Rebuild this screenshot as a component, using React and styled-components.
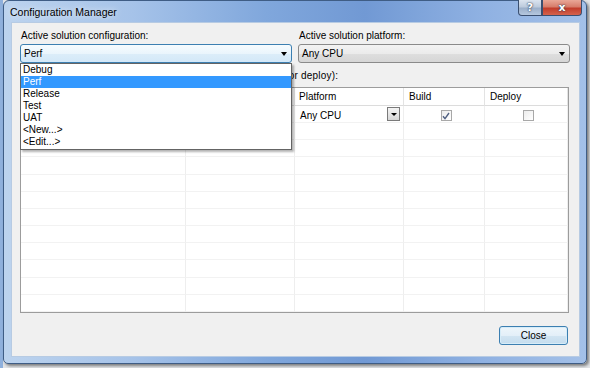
import React from 'react'
import styled, { createGlobalStyle } from 'styled-components'

const GlobalStyle = createGlobalStyle`
  html, body {
    margin: 0;
    padding: 0;
    background: #cfd7e1;
  }
  body {
    font-family: "Liberation Sans", Arial, sans-serif;
    font-size: 10px;
    color: #000;
  }
`

const configs = ['Debug', 'Perf', 'Release', 'Test', 'UAT', '<New...>', '<Edit...>']

const Screen = styled.div`
  width: 590px;
  height: 368px;
  overflow: hidden;
  box-sizing: border-box;
  padding-left: 3px;
  background: linear-gradient(90deg, #8fb0dc 0, #8fb0dc 3px, #e2e4e7 3px);
`

const Window = styled.div`
  width: 584px;
  height: 364px;
  box-sizing: border-box;
  border: 1px solid #3f5d85;
  border-radius: 6px 6px 5px 5px;
  background: linear-gradient(90deg, #bcd3ee 0%, #a6c3e9 22%, #80a7dc 45%, #7199d4 62%, #8fb1e2 82%, #a3c0e8 100%);
  box-shadow: 2px 2px 3px rgba(0, 0, 0, 0.45);
  display: flex;
  flex-direction: column;
  padding: 0 6px 6px 7px;
`

const TitleBar = styled.div`
  height: 21px;
  display: flex;
  align-items: center;
  margin-left: -7px;
  margin-right: -6px;
  padding-left: 6px;
  padding-right: 4px;
`

const Title = styled.span`
  flex: 1;
  font-size: 10.5px;
  color: #000;
  text-shadow: 0 0 6px rgba(255, 255, 255, 0.9);
`

const Captions = styled.div`
  align-self: flex-start;
  margin-top: -1px;
  display: flex;
`

const CaptionButton = styled.div`
  width: ${p => p.$width}px;
  height: 16px;
  box-sizing: border-box;
  border: 1px solid #3a4f70;
  border-top: none;
  border-radius: ${p => p.$radius};
  display: flex;
  align-items: center;
  justify-content: center;
  background: ${p => p.$close
    ? 'linear-gradient(180deg, #e9a797 0%, #d77d6b 45%, #c23d2b 55%, #d4624d 100%)'
    : 'linear-gradient(180deg, #dbe4ef 0%, #bdcbdd 45%, #9cb0ca 55%, #b5c7df 100%)'};
  color: #fff;
  font-family: "DejaVu Sans", sans-serif;
  font-weight: bold;
  font-size: 11px;
  line-height: 1;
  text-shadow: 0 0 2px #2b3a52, 0 0 1px #2b3a52;
`

const Client = styled.div`
  flex: 1;
  box-sizing: border-box;
  border: 1px solid #b7cbe3;
  background: #f0f0f0;
  display: flex;
  flex-direction: column;
  padding: 7px 0 11px 0;
`

const TopRow = styled.div`
  display: grid;
  grid-template-columns: 272px 272px;
  column-gap: 6px;
  padding-left: 8px;
`

const Field = styled.div`
  display: flex;
  flex-direction: column;
`

const Label = styled.div`
  height: 12px;
  line-height: 12px;
  margin: 0 0 2px 1px;
  white-space: nowrap;
`

const ComboWrap = styled.div`
  position: relative;
`

const Combo = styled.div`
  height: 19px;
  box-sizing: border-box;
  border: 1px solid ${p => p.$focused ? '#3c7fb1' : '#8a8a8a'};
  border-radius: 3px;
  background: ${p => p.$focused
    ? 'linear-gradient(180deg, #f6fbfe 0%, #eaf5fc 50%, #dcedf9 51%, #d3e8f8 100%)'
    : 'linear-gradient(180deg, #f3f3f3 0%, #ebebeb 50%, #dedede 51%, #d6d6d6 100%)'};
  display: flex;
  align-items: center;
  justify-content: space-between;
  padding: 0 4px 0 3px;
`

const Arrow = styled.span`
  width: 0;
  height: 0;
  border-left: 3.5px solid transparent;
  border-right: 3.5px solid transparent;
  border-top: 4px solid #000;
`

const DropList = styled.div`
  position: absolute;
  top: 100%;
  left: 0;
  width: 272px;
  box-sizing: border-box;
  border: 1px solid #646464;
  background: #fff;
  padding-bottom: 1px;
  box-shadow: 2px 2px 2px rgba(0, 0, 0, 0.3);
  z-index: 10;
`

const DropItem = styled.div`
  height: 12px;
  line-height: 12px;
  padding-left: 2px;
  background: ${p => p.$selected ? '#3399ff' : 'transparent'};
  color: ${p => p.$selected ? '#fff' : '#000'};
`

const ProjectLabel = styled(Label)`
  margin: 7px 0 0 9px;
  letter-spacing: 0.2px;
`

const Grid = styled.div`
  margin: 5px 10px 0 8px;
  height: 226px;
  box-sizing: border-box;
  border: 1px solid #9c9c9c;
  background: #fff;
  display: grid;
  grid-template-columns: 165px 109px 109px 81px 1fr;
  grid-template-rows: 18px repeat(12, 1fr);
  overflow: hidden;
`

const Cell = styled.div`
  box-sizing: border-box;
  border-right: 1px solid ${p => p.$header ? '#e3e3e3' : '#eeeeee'};
  border-bottom: 1px solid ${p => p.$header ? '#dcdcdc' : '#f2f2f2'};
  display: flex;
  align-items: center;
  justify-content: ${p => p.$center ? 'center' : 'flex-start'};
  padding: ${p => p.$pad || '0 0 0 4px'};
  white-space: nowrap;
  overflow: hidden;
`

const MiniCombo = styled.div`
  flex: 1;
  height: 15px;
  box-sizing: border-box;
  border: 1px solid #8a8a8a;
  margin-right: 2px;
`

const CellText = styled.span`
  flex: 1;
`

const DropButton = styled.div`
  width: 13px;
  height: 14px;
  box-sizing: border-box;
  border: 1px solid #7a7a7a;
  background: linear-gradient(180deg, #f4f4f4 0%, #e6e6e6 50%, #d6d6d6 100%);
  display: flex;
  align-items: center;
  justify-content: center;
  margin-right: 3px;
  margin-top: -2px;
`

const SmallArrow = styled(Arrow)`
  border-left-width: 3px;
  border-right-width: 3px;
  border-top-width: 3px;
`

const Check = styled.div`
  width: 11px;
  height: 11px;
  box-sizing: border-box;
  border: 1px solid #a8a8a8;
  background: linear-gradient(135deg, #ececec 0%, #ffffff 100%);
  display: flex;
  align-items: center;
  justify-content: center;
  margin-top: 3px;
`

const ButtonRow = styled.div`
  display: flex;
  justify-content: flex-end;
  padding-right: 11px;
  margin-top: 13px;
`

const Button = styled.button`
  width: 69px;
  height: 19px;
  box-sizing: border-box;
  border: 1px solid #3c7fb1;
  border-radius: 3px;
  background: linear-gradient(180deg, #eef6fb 0%, #e3eff8 50%, #d2e5f2 51%, #c4dcee 100%);
  box-shadow: inset 0 0 0 1px #d6ecf8;
  font-family: "Liberation Sans", Arial, sans-serif;
  font-size: 10px;
  color: #000;
  padding: 0;
`

function Checkbox({ checked }) {
  return (
    <Check>
      {checked && (
        <svg width="8" height="8" viewBox="0 0 8 8">
          <polyline points="1,4.2 3,6.6 7,1" fill="none" stroke="#4f5f80" strokeWidth="1.4" />
        </svg>
      )}
    </Check>
  )
}

export default function App() {
  const emptyRows = Array.from({ length: 11 })
  return (
    <Screen>
      <GlobalStyle />
      <Window>
        <TitleBar>
          <Title>Configuration Manager</Title>
          <Captions>
            <CaptionButton $width={24} $radius="0 0 0 4px">?</CaptionButton>
            <CaptionButton $width={40} $radius="0 0 4px 0" $close>x</CaptionButton>
          </Captions>
        </TitleBar>
        <Client>
          <TopRow>
            <Field>
              <Label>Active solution configuration:</Label>
              <ComboWrap>
                <Combo $focused>
                  <span>Perf</span>
                  <Arrow />
                </Combo>
                <DropList>
                  {configs.map(c => (
                    <DropItem key={c} $selected={c === 'Perf'}>{c}</DropItem>
                  ))}
                </DropList>
              </ComboWrap>
            </Field>
            <Field>
              <Label>Active solution platform:</Label>
              <ComboWrap>
                <Combo>
                  <span>Any CPU</span>
                  <Arrow />
                </Combo>
              </ComboWrap>
            </Field>
          </TopRow>
          <ProjectLabel>Project contexts (check the project configurations to build or deploy):</ProjectLabel>
          <Grid>
            <Cell $header />
            <Cell $header />
            <Cell $header>Platform</Cell>
            <Cell $header $pad="0 0 0 5px">Build</Cell>
            <Cell $header $pad="0 0 0 5px">Deploy</Cell>

            <Cell />
            <Cell $pad="0 0 0 2px">
              <MiniCombo />
            </Cell>
            <Cell $pad="2px 0 0 5px">
              <CellText>Any CPU</CellText>
              <DropButton><SmallArrow /></DropButton>
            </Cell>
            <Cell $center><Checkbox checked /></Cell>
            <Cell $center><Checkbox /></Cell>

            {emptyRows.map((_, i) => (
              <React.Fragment key={i}>
                <Cell />
                <Cell />
                <Cell />
                <Cell />
                <Cell />
              </React.Fragment>
            ))}
          </Grid>
          <ButtonRow>
            <Button>Close</Button>
          </ButtonRow>
        </Client>
      </Window>
    </Screen>
  )
}
